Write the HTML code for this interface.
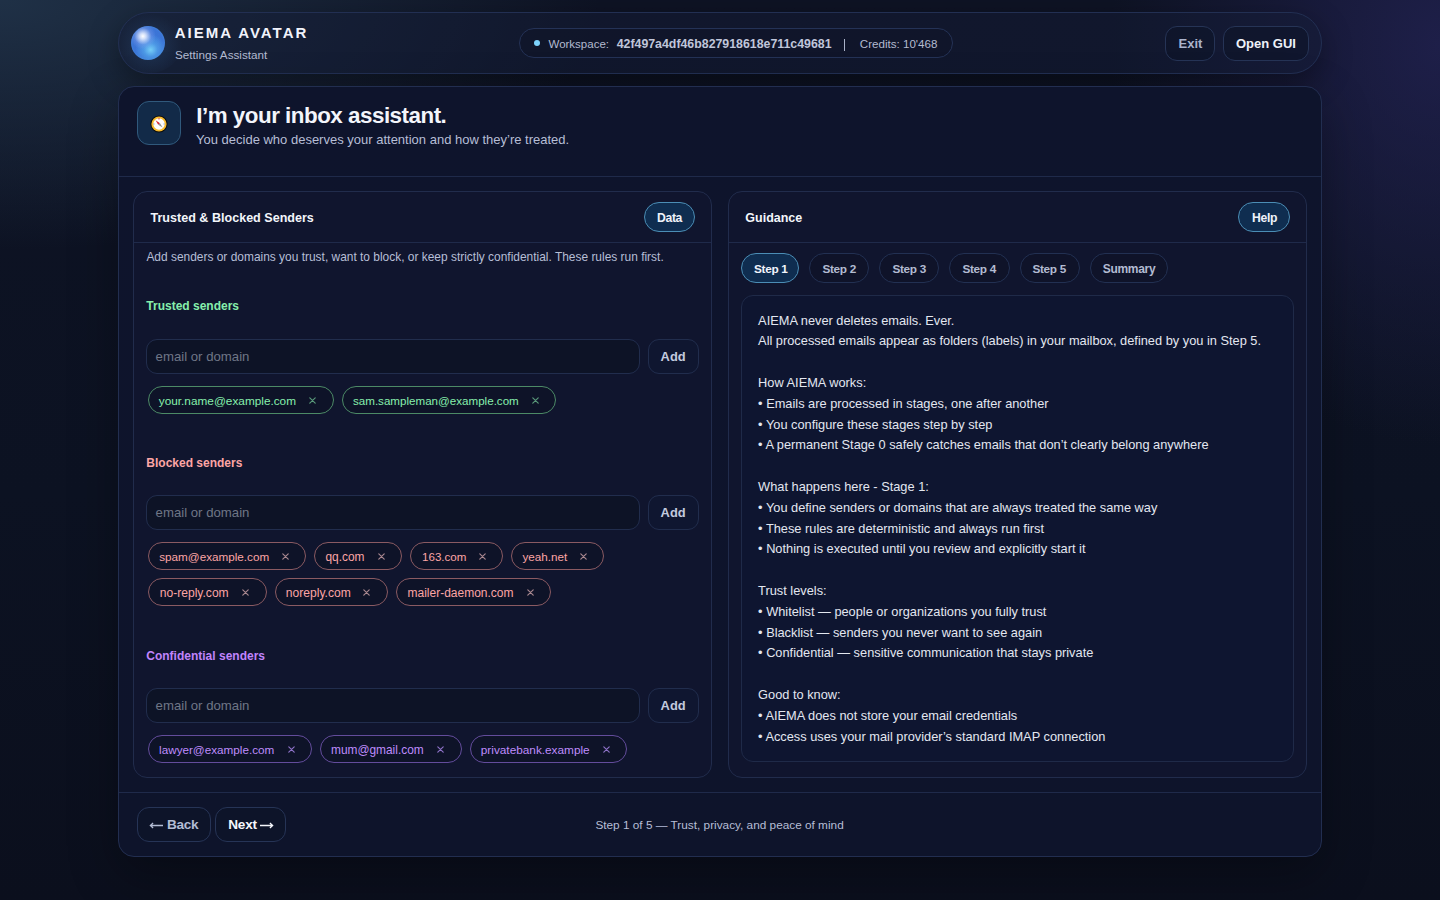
<!DOCTYPE html>
<html><head><meta charset="utf-8"><title>AIEMA Avatar — Settings Assistant</title>
<style>
*{box-sizing:border-box;margin:0;padding:0}
html,body{width:1440px;height:900px;overflow:hidden}
body{font-family:"Liberation Sans",sans-serif;color:#e5e7eb;position:relative;
background:
 radial-gradient(ellipse 600px 250px at 0% 0%, rgba(32,50,72,.95), rgba(32,50,72,0) 100%),
 radial-gradient(ellipse 330px 400px at 100% 5%, rgba(34,34,82,.8), rgba(34,34,82,0) 100%),
 linear-gradient(180deg,#0e1324 0%,#0c1222 55%,#0b0f1d 100%);}
.abs{position:absolute}
.t{position:absolute;line-height:0;white-space:nowrap}
.top{position:absolute;left:118px;top:12px;width:1204px;height:62px;border:1px solid #222f52;border-radius:31px;box-shadow:0 10px 30px rgba(0,0,0,.35);background:rgba(20,28,54,.5)}
.orbglow{position:absolute;left:118px;top:13px;width:64px;height:60px;border-radius:50%;background:radial-gradient(circle at 50% 55%,rgba(50,90,140,.35),rgba(50,90,140,0) 70%)}
.orb{position:absolute;left:131px;top:26px;width:34px;height:34px;border-radius:50%;
 background:radial-gradient(circle at 35% 30%,rgba(255,255,255,1) 0%,rgba(235,240,255,.85) 9%,rgba(140,165,240,.35) 26%,rgba(120,150,240,0) 40%),
 radial-gradient(circle at 58% 70%,rgba(120,210,248,.95) 0%,rgba(90,180,240,.55) 22%,rgba(70,140,225,0) 50%),
 radial-gradient(circle at 50% 50%,#3c78da 0%,#3b74d6 62%,#4a92e2 88%,#8a8ce6 100%)}
.pill{position:absolute;left:519px;top:28px;width:434px;height:30px;border:1px solid #243256;border-radius:15px;background:rgba(15,21,42,.7)}
.dot{position:absolute;left:534px;top:40px;width:6px;height:6px;border-radius:50%;background:#7dd3fc}
.btn{position:absolute;border:1px solid #263456;border-radius:12px;background:rgba(14,20,40,.6)}
.card{position:absolute;left:118px;top:86px;width:1204px;height:771px;border:1px solid #222e50;border-radius:16px;box-shadow:0 18px 50px rgba(0,0,0,.3);background:linear-gradient(180deg,rgb(14,20,44) 0%,rgb(14,20,43) 100%)}
.iconbox{position:absolute;left:137px;top:101px;width:44px;height:44px;border:1px solid #30597c;border-radius:12px;background:#122a48}
.hline{position:absolute;height:1px;background:#1f2a4a}
.panel{position:absolute;top:191px;width:579px;height:587px;border:1px solid #212c4c;border-radius:14px;background:rgb(16,21,46)}
.pbtn{position:absolute;top:202px;height:30px;border:1px solid #4b8db5;border-radius:15px;background:#0f2d50}
.input{position:absolute;left:146px;width:494px;height:35px;border:1px solid #212d4d;border-radius:11px;background:#0d1326}
.add{position:absolute;left:648px;width:51px;height:35px;border:1px solid #212d4d;border-radius:11px;background:#0f1630}
.chip{position:absolute;height:28px;border:1px solid;border-radius:14px;background:rgba(13,18,36,.6)}
.g{border-color:#4c8a66}.r{border-color:#8a5a62}.p{border-color:#634c9c}
.cx{position:absolute;width:7px;height:7px;background:
 linear-gradient(45deg,transparent 44%,#9aa3b8 44%,#9aa3b8 56%,transparent 56%),
 linear-gradient(-45deg,transparent 44%,#9aa3b8 44%,#9aa3b8 56%,transparent 56%)}
.tab{position:absolute;top:253px;height:30px;border:1px solid #223052;border-radius:15px;background:rgba(13,18,36,.5)}
.tab.on{background:#0f2d50;border-color:#4b8db5}
.gbox{position:absolute;left:741px;top:295px;width:553px;height:467px;border:1px solid #1f2a48;border-radius:12px;background:rgb(14,21,48)}

</style></head>
<body>
<div class="top"></div>
<div class="orbglow"></div><div class="orb"></div>
<div class="t" style="left:174.7px;top:33.40px;font-size:15px;font-weight:bold;color:#f1f3fb;letter-spacing:2.02px">AIEMA AVATAR</div>
<div class="t" style="left:175.0px;top:54.85px;font-size:11.7px;color:#b3bbd2;">Settings Assistant</div>
<div class="pill"></div><div class="dot"></div>
<div class="t" style="left:548.5px;top:43.82px;font-size:11.5px;color:#b3bad0;">Workspace:</div>
<div class="t" style="left:616.7px;top:43.52px;font-size:12.35px;font-weight:bold;color:#c0c6da;">42f497a4df46b827918618e711c49681</div>
<div class="abs" style="left:844px;top:39px;width:1.3px;height:12px;background:#aab2c8"></div>
<div class="t" style="left:859.8px;top:43.78px;font-size:11.6px;color:#b3bad0;">Credits: 10'468</div>
<div class="btn" style="left:1165px;top:26px;width:50px;height:35px"></div>
<div class="btn" style="left:1223px;top:26px;width:86px;height:35px"></div>
<div class="t" style="left:1178.5px;top:43.50px;font-size:13px;font-weight:bold;color:#aab3cc;">Exit</div>
<div class="t" style="left:1236.0px;top:43.50px;font-size:13px;font-weight:bold;color:#eef1f8;">Open GUI</div>
<div class="card"></div>
<div class="iconbox"></div>
<svg class="abs" style="left:150px;top:115px" width="18" height="18" viewBox="0 0 18 18">
<circle cx="9" cy="9" r="8.6" fill="#0b0b0b"/><circle cx="9" cy="9" r="7.6" fill="#f6b92c"/><circle cx="9" cy="9" r="5.7" fill="#fdfdfd"/>
<rect x="8.2" y="3.3" width="1.6" height="1" fill="#e03a3a"/><rect x="3.4" y="8.5" width="1" height="1" fill="#6a8ad0"/><rect x="13.6" y="8.5" width="1" height="1" fill="#6a8ad0"/><polygon points="5.6,5.2 10.0,8.2 8.2,9.8" fill="#d9242f"/><polygon points="10.0,8.2 12.6,12.4 8.2,9.8" fill="#8f8f8f"/></svg>
<div class="t" style="left:196.3px;top:115.64px;font-size:22.4px;font-weight:bold;color:#f3f5fb;letter-spacing:-0.5px">I’m your inbox assistant.</div>
<div class="t" style="left:196.0px;top:140.10px;font-size:13px;color:#b6bed6;">You decide who deserves your attention and how they’re treated.</div>
<div class="hline" style="left:119px;top:176px;width:1202px"></div>
<div class="panel" style="left:133px"></div><div class="panel" style="left:728px"></div>
<div class="hline" style="left:134px;top:242px;width:577px"></div><div class="hline" style="left:729px;top:242px;width:577px"></div>
<div class="t" style="left:150.5px;top:217.94px;font-size:12.57px;font-weight:bold;color:#f3f5fb;">Trusted &amp; Blocked Senders</div>
<div class="pbtn" style="left:644px;width:51px"></div>
<div class="t" style="left:657.0px;top:218.07px;font-size:12.2px;font-weight:bold;color:#eef2fa;letter-spacing:-0.35px">Data</div>
<div class="t" style="left:146.4px;top:257.16px;font-size:11.94px;color:#b6bed6;">Add senders or domains you trust, want to block, or keep strictly confidential. These rules run first.</div>
<div class="t" style="left:146.3px;top:306.04px;font-size:12px;font-weight:bold;color:#86efac;">Trusted senders</div>
<div class="input" style="top:339px"></div><div class="add" style="top:339px"></div>
<div class="t" style="left:155.6px;top:356.83px;font-size:13.2px;color:#6f7686;">email or domain</div>
<div class="t" style="left:660.6px;top:356.63px;font-size:12.9px;font-weight:bold;color:#c3cadf;">Add</div>
<div class="t" style="left:146.3px;top:463.24px;font-size:12px;font-weight:bold;color:#fca5a5;">Blocked senders</div>
<div class="input" style="top:495px"></div><div class="add" style="top:495px"></div>
<div class="t" style="left:155.6px;top:512.83px;font-size:13.2px;color:#6f7686;">email or domain</div>
<div class="t" style="left:660.6px;top:512.63px;font-size:12.9px;font-weight:bold;color:#c3cadf;">Add</div>
<div class="t" style="left:146.3px;top:656.04px;font-size:12px;font-weight:bold;color:#c084fc;">Confidential senders</div>
<div class="input" style="top:688px"></div><div class="add" style="top:688px"></div>
<div class="t" style="left:155.6px;top:705.83px;font-size:13.2px;color:#6f7686;">email or domain</div>
<div class="t" style="left:660.6px;top:705.63px;font-size:12.9px;font-weight:bold;color:#c3cadf;">Add</div>
<div class="chip g" style="left:148px;top:386px;width:186px"></div>
<div class="t" style="left:158.8px;top:400.71px;font-size:11.8px;color:#86efac;">your.name@example.com</div>
<svg class="abs" style="left:309.0px;top:396.5px" width="7" height="7" viewBox="0 0 7 7"><path d="M0.8 0.8L6.2 6.2M6.2 0.8L0.8 6.2" stroke="#5a9a7a" stroke-width="1.15" stroke-linecap="round"/></svg>
<div class="chip g" style="left:342px;top:386px;width:214px"></div>
<div class="t" style="left:353.0px;top:400.78px;font-size:11.6px;color:#86efac;">sam.sampleman@example.com</div>
<svg class="abs" style="left:532.0px;top:396.5px" width="7" height="7" viewBox="0 0 7 7"><path d="M0.8 0.8L6.2 6.2M6.2 0.8L0.8 6.2" stroke="#5a9a7a" stroke-width="1.15" stroke-linecap="round"/></svg>
<div class="chip r" style="left:148px;top:542px;width:158px"></div>
<div class="t" style="left:159.2px;top:556.75px;font-size:11.7px;color:#fca5a5;">spam@example.com</div>
<svg class="abs" style="left:281.7px;top:552.5px" width="7" height="7" viewBox="0 0 7 7"><path d="M0.8 0.8L6.2 6.2M6.2 0.8L0.8 6.2" stroke="#a98890" stroke-width="1.15" stroke-linecap="round"/></svg>
<div class="chip r" style="left:314px;top:542px;width:88px"></div>
<div class="t" style="left:325.5px;top:556.68px;font-size:11.9px;color:#fca5a5;">qq.com</div>
<svg class="abs" style="left:377.5px;top:552.5px" width="7" height="7" viewBox="0 0 7 7"><path d="M0.8 0.8L6.2 6.2M6.2 0.8L0.8 6.2" stroke="#a98890" stroke-width="1.15" stroke-linecap="round"/></svg>
<div class="chip r" style="left:410px;top:542px;width:93px"></div>
<div class="t" style="left:422.0px;top:556.78px;font-size:11.6px;color:#fca5a5;">163.com</div>
<svg class="abs" style="left:478.7px;top:552.5px" width="7" height="7" viewBox="0 0 7 7"><path d="M0.8 0.8L6.2 6.2M6.2 0.8L0.8 6.2" stroke="#a98890" stroke-width="1.15" stroke-linecap="round"/></svg>
<div class="chip r" style="left:511px;top:542px;width:93px"></div>
<div class="t" style="left:522.5px;top:556.75px;font-size:11.7px;color:#fca5a5;">yeah.net</div>
<svg class="abs" style="left:579.5px;top:552.5px" width="7" height="7" viewBox="0 0 7 7"><path d="M0.8 0.8L6.2 6.2M6.2 0.8L0.8 6.2" stroke="#a98890" stroke-width="1.15" stroke-linecap="round"/></svg>
<div class="chip r" style="left:148px;top:578px;width:119px"></div>
<div class="t" style="left:159.7px;top:592.61px;font-size:12.1px;color:#fca5a5;">no-reply.com</div>
<svg class="abs" style="left:242.0px;top:588.5px" width="7" height="7" viewBox="0 0 7 7"><path d="M0.8 0.8L6.2 6.2M6.2 0.8L0.8 6.2" stroke="#a98890" stroke-width="1.15" stroke-linecap="round"/></svg>
<div class="chip r" style="left:275px;top:578px;width:113px"></div>
<div class="t" style="left:285.8px;top:592.61px;font-size:12.1px;color:#fca5a5;">noreply.com</div>
<svg class="abs" style="left:363.3px;top:588.5px" width="7" height="7" viewBox="0 0 7 7"><path d="M0.8 0.8L6.2 6.2M6.2 0.8L0.8 6.2" stroke="#a98890" stroke-width="1.15" stroke-linecap="round"/></svg>
<div class="chip r" style="left:396px;top:578px;width:155px"></div>
<div class="t" style="left:407.5px;top:592.64px;font-size:12.0px;color:#fca5a5;">mailer-daemon.com</div>
<svg class="abs" style="left:526.7px;top:588.5px" width="7" height="7" viewBox="0 0 7 7"><path d="M0.8 0.8L6.2 6.2M6.2 0.8L0.8 6.2" stroke="#a98890" stroke-width="1.15" stroke-linecap="round"/></svg>
<div class="chip p" style="left:148px;top:735px;width:164px"></div>
<div class="t" style="left:159.1px;top:749.75px;font-size:11.7px;color:#bf8cfc;">lawyer@example.com</div>
<svg class="abs" style="left:287.6px;top:745.5px" width="7" height="7" viewBox="0 0 7 7"><path d="M0.8 0.8L6.2 6.2M6.2 0.8L0.8 6.2" stroke="#8e72c8" stroke-width="1.15" stroke-linecap="round"/></svg>
<div class="chip p" style="left:320px;top:735px;width:142px"></div>
<div class="t" style="left:331.0px;top:749.68px;font-size:11.9px;color:#bf8cfc;">mum@gmail.com</div>
<svg class="abs" style="left:437.2px;top:745.5px" width="7" height="7" viewBox="0 0 7 7"><path d="M0.8 0.8L6.2 6.2M6.2 0.8L0.8 6.2" stroke="#8e72c8" stroke-width="1.15" stroke-linecap="round"/></svg>
<div class="chip p" style="left:470px;top:735px;width:157px"></div>
<div class="t" style="left:480.8px;top:749.71px;font-size:11.8px;color:#bf8cfc;">privatebank.example</div>
<svg class="abs" style="left:602.7px;top:745.5px" width="7" height="7" viewBox="0 0 7 7"><path d="M0.8 0.8L6.2 6.2M6.2 0.8L0.8 6.2" stroke="#8e72c8" stroke-width="1.15" stroke-linecap="round"/></svg>
<div class="t" style="left:745.3px;top:217.67px;font-size:12.5px;font-weight:bold;color:#f3f5fb;">Guidance</div>
<div class="pbtn" style="left:1238px;width:52px"></div>
<div class="t" style="left:1252.0px;top:218.07px;font-size:12.2px;font-weight:bold;color:#eef2fa;letter-spacing:-0.3px">Help</div>
<div class="tab on" style="left:741px;width:58px"></div>
<div class="t" style="left:754.0px;top:269.31px;font-size:11.8px;font-weight:bold;color:#f1f4fb;letter-spacing:-0.32px">Step 1</div>
<div class="tab" style="left:809px;width:60px"></div>
<div class="t" style="left:822.4px;top:269.31px;font-size:11.8px;font-weight:bold;color:#b3bbd2;letter-spacing:-0.32px">Step 2</div>
<div class="tab" style="left:879px;width:60px"></div>
<div class="t" style="left:892.4px;top:269.31px;font-size:11.8px;font-weight:bold;color:#b3bbd2;letter-spacing:-0.32px">Step 3</div>
<div class="tab" style="left:949px;width:61px"></div>
<div class="t" style="left:962.4px;top:269.31px;font-size:11.8px;font-weight:bold;color:#b3bbd2;letter-spacing:-0.32px">Step 4</div>
<div class="tab" style="left:1020px;width:60px"></div>
<div class="t" style="left:1032.4px;top:269.31px;font-size:11.8px;font-weight:bold;color:#b3bbd2;letter-spacing:-0.32px">Step 5</div>
<div class="tab" style="left:1090px;width:78px"></div>
<div class="t" style="left:1102.8px;top:269.24px;font-size:12.0px;font-weight:bold;color:#b3bbd2;letter-spacing:-0.32px">Summary</div>
<div class="gbox"></div>
<div class="t" style="left:758.1px;top:320.56px;font-size:12.8px;color:#e3e7f0;">AIEMA never deletes emails. Ever.</div>
<div class="t" style="left:758.1px;top:341.36px;font-size:12.8px;color:#e3e7f0;">All processed emails appear as folders (labels) in your mailbox, defined by you in Step 5.</div>
<div class="t" style="left:758.1px;top:382.96px;font-size:12.8px;color:#e3e7f0;">How AIEMA works:</div>
<div class="t" style="left:758.1px;top:403.76px;font-size:12.8px;color:#e3e7f0;">• Emails are processed in stages, one after another</div>
<div class="t" style="left:758.1px;top:424.56px;font-size:12.8px;color:#e3e7f0;">• You configure these stages step by step</div>
<div class="t" style="left:758.1px;top:445.36px;font-size:12.8px;color:#e3e7f0;">• A permanent Stage 0 safely catches emails that don’t clearly belong anywhere</div>
<div class="t" style="left:758.1px;top:486.96px;font-size:12.8px;color:#e3e7f0;">What happens here - Stage 1:</div>
<div class="t" style="left:758.1px;top:507.76px;font-size:12.8px;color:#e3e7f0;">• You define senders or domains that are always treated the same way</div>
<div class="t" style="left:758.1px;top:528.56px;font-size:12.8px;color:#e3e7f0;">• These rules are deterministic and always run first</div>
<div class="t" style="left:758.1px;top:549.36px;font-size:12.8px;color:#e3e7f0;">• Nothing is executed until you review and explicitly start it</div>
<div class="t" style="left:758.1px;top:590.96px;font-size:12.8px;color:#e3e7f0;">Trust levels:</div>
<div class="t" style="left:758.1px;top:611.76px;font-size:12.8px;color:#e3e7f0;">• Whitelist — people or organizations you fully trust</div>
<div class="t" style="left:758.1px;top:632.56px;font-size:12.8px;color:#e3e7f0;">• Blacklist — senders you never want to see again</div>
<div class="t" style="left:758.1px;top:653.36px;font-size:12.8px;color:#e3e7f0;">• Confidential — sensitive communication that stays private</div>
<div class="t" style="left:758.1px;top:694.96px;font-size:12.8px;color:#e3e7f0;">Good to know:</div>
<div class="t" style="left:758.1px;top:715.76px;font-size:12.8px;color:#e3e7f0;">• AIEMA does not store your email credentials</div>
<div class="t" style="left:758.1px;top:736.56px;font-size:12.8px;color:#e3e7f0;">• Access uses your mail provider’s standard IMAP connection</div>
<div class="hline" style="left:119px;top:792px;width:1202px"></div>
<div class="btn" style="left:137px;top:807px;width:74px;height:35px"></div><div class="btn" style="left:215px;top:807px;width:71px;height:35px"></div>
<svg class="abs" style="left:149px;top:821px" width="15" height="9" viewBox="0 0 15 9"><path d="M1.4 4.5H14M4.1 2.1L1.4 4.5L4.1 6.9" stroke="#b3bcd4" stroke-width="1.3" fill="none"/></svg>
<div class="t" style="left:166.9px;top:825.39px;font-size:13.6px;font-weight:bold;color:#b3bcd4;letter-spacing:-0.25px">Back</div>
<div class="t" style="left:228.3px;top:825.39px;font-size:13.6px;font-weight:bold;color:#f5f7fc;letter-spacing:-0.25px">Next</div>
<svg class="abs" style="left:259px;top:821px" width="15" height="9" viewBox="0 0 15 9"><path d="M1 4.5H13.6M10.9 2.1L13.6 4.5L10.9 6.9" stroke="#f5f7fc" stroke-width="1.3" fill="none"/></svg>
<div class="t" style="left:595.4px;top:824.91px;font-size:11.8px;color:#b6bed6;">Step 1 of 5 — Trust, privacy, and peace of mind</div>
</body></html>
